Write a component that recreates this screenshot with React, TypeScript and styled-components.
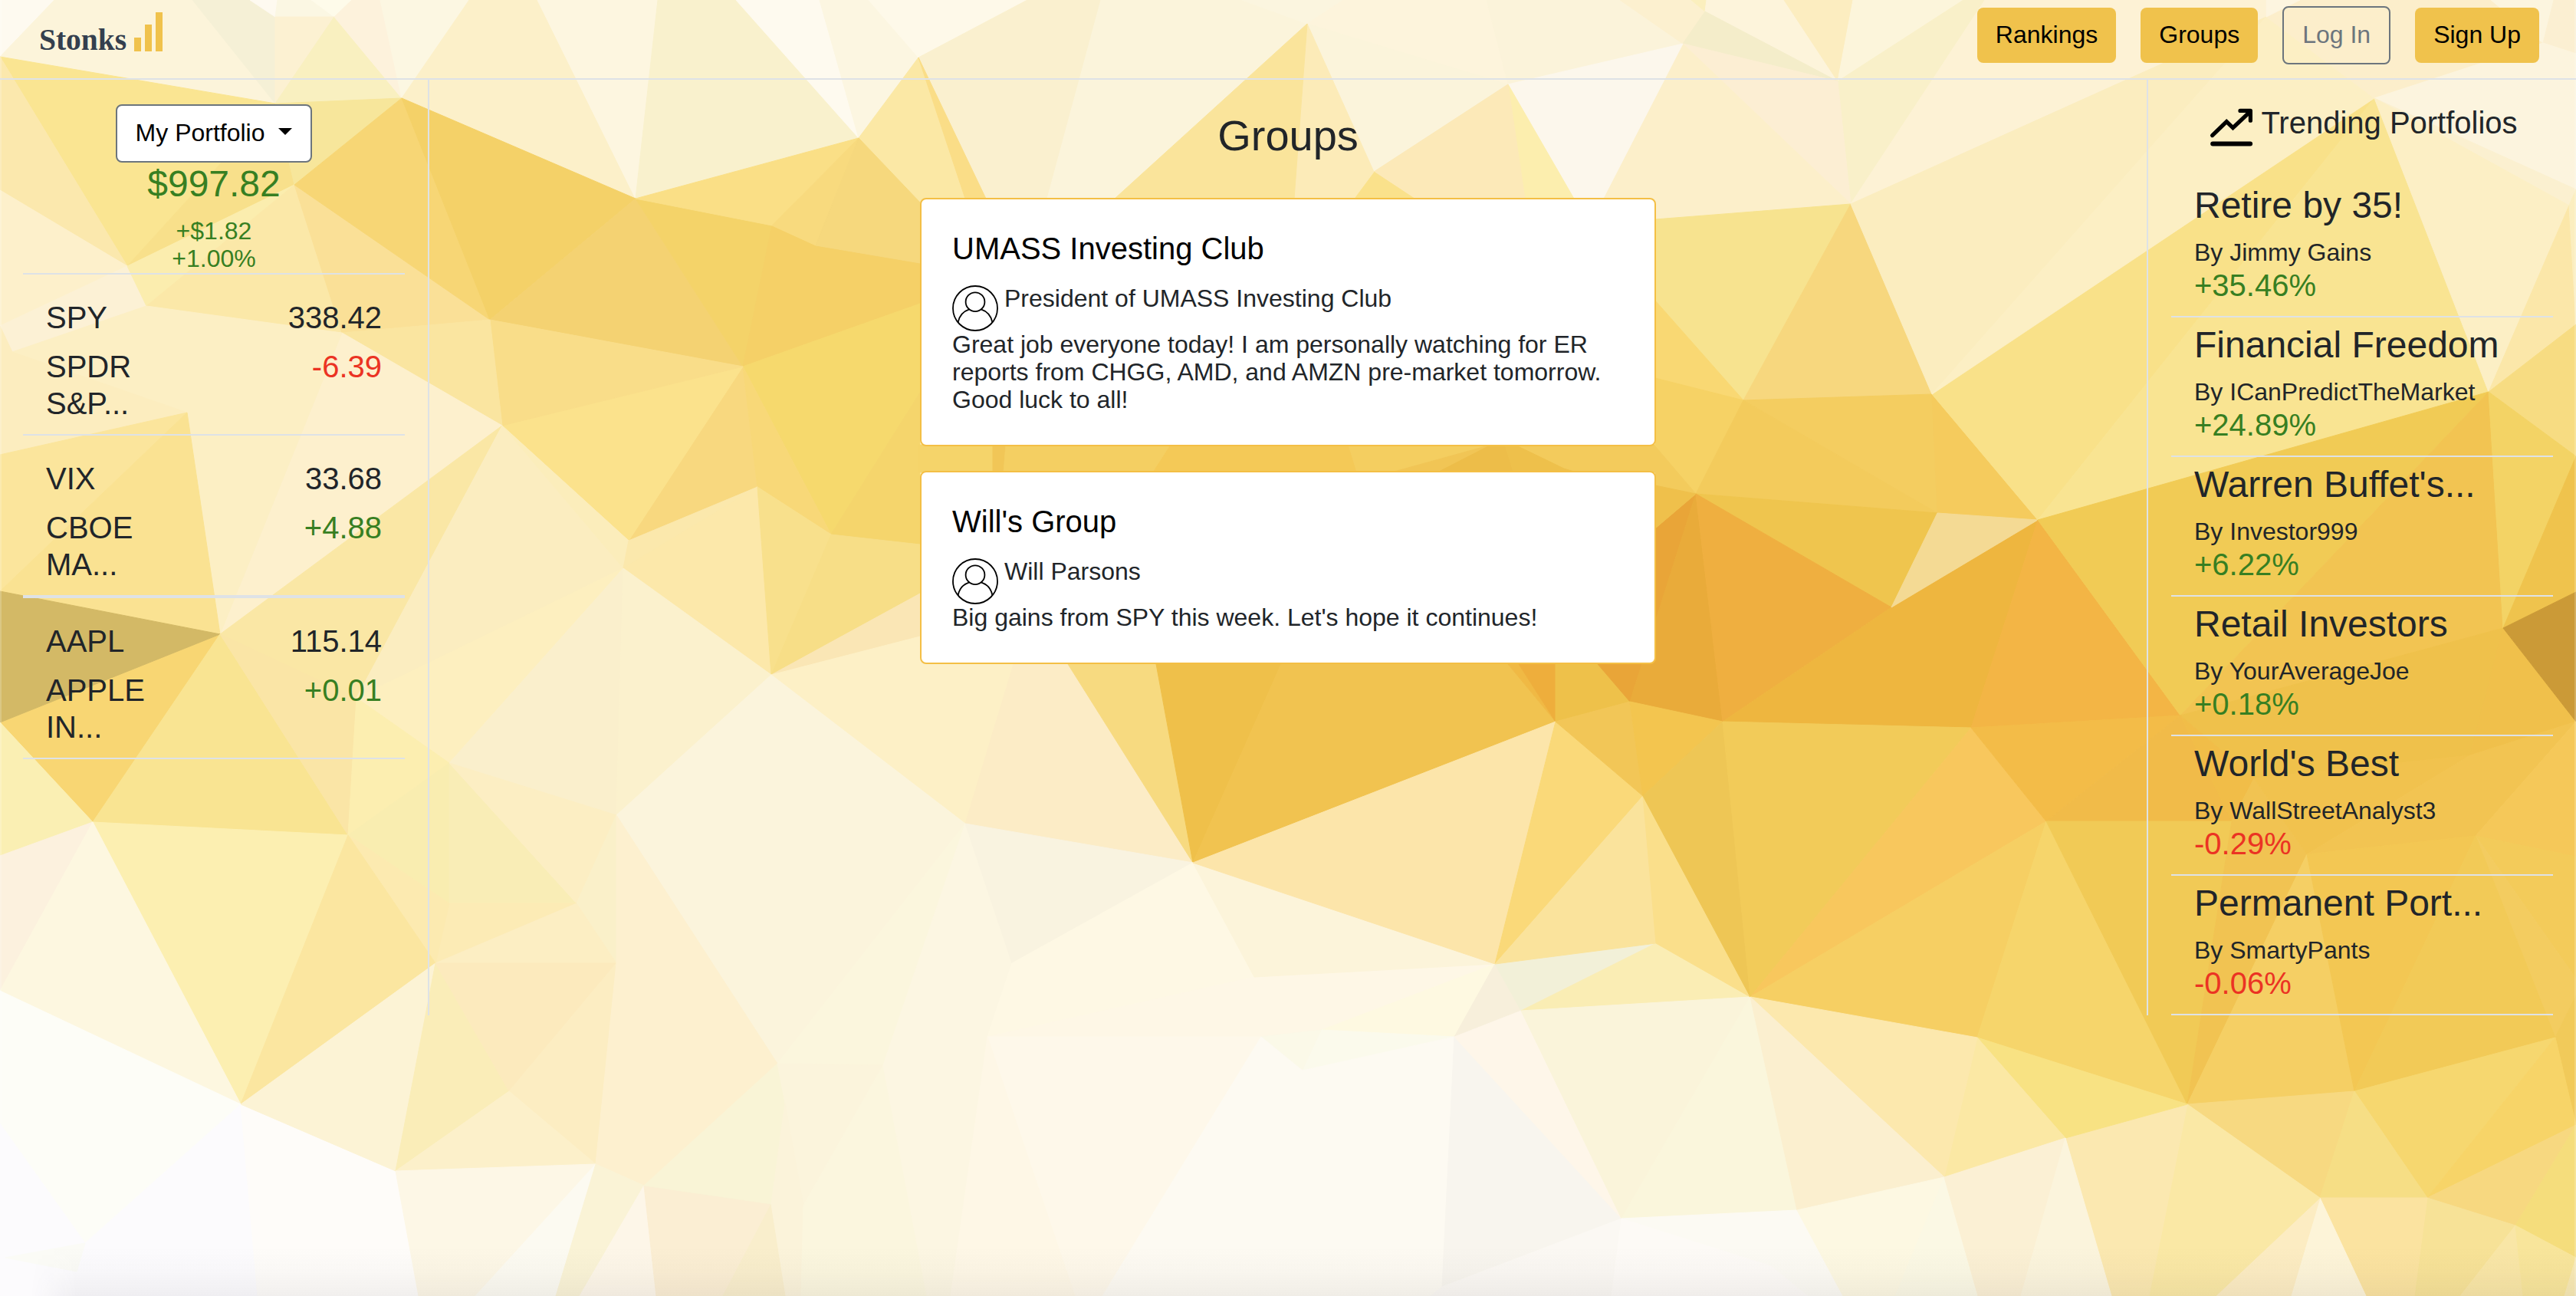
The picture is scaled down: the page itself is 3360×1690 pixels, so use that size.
import React from 'react';
import styled, { createGlobalStyle } from 'styled-components';

const GlobalStyle = createGlobalStyle`
  *, *::before, *::after { box-sizing: border-box; }
  html, body { margin: 0; padding: 0; }
  body {
    font-family: "Liberation Sans", Arial, Helvetica, sans-serif;
    font-size: 32px;
    line-height: 36px;
    color: #212529;
    background: #fdf6e0;
    overflow: hidden;
  }
  h1, h2, h3, p { margin: 0; font-weight: 400; }
`;

const gold = '#f0c24c';
const rule = '#dee2e6';
const gain = '#377f22';
const loss = '#eb3323';

/* Low-poly backdrop: fill colour and polygon points of every facet. */
const facets: [string, string][] = [
  ['#fefaf0', '0,0 71,0 0,74'],
  ['#fcf4da', '71,0 251,0 359,135 0,74'],
  ['#f5f0d6', '251,0 326,0 359,22 359,135'],
  ['#fefaf0', '326,0 362,0 359,22'],
  ['#fbf7e3', '362,0 406,0 436,22 359,22'],
  ['#fefbea', '406,0 459,0 436,22'],
  ['#fcf1d2', '359,22 436,22 359,135'],
  ['#f9f0c0', '436,22 524,128 359,135'],
  ['#fdf2dc', '459,0 496,0 524,128 436,22'],
  ['#fcf7e2', '496,0 612,0 524,128'],
  ['#fcf0c9', '612,0 701,0 829,259 524,128'],
  ['#fdf6e0', '701,0 858,0 829,259'],
  ['#f9f1cd', '858,0 960,0 1120,180 829,259'],
  ['#fefaef', '960,0 1069,0 1120,180'],
  ['#fcf6e1', '1069,0 1133,0 1198,75 1120,180'],
  ['#fef9e9', '1133,0 1340,0 1198,75'],
  ['#faf0cf', '1340,0 1436,0 1366,259 1286,259 1198,75'],
  ['#fbf4db', '1436,0 1620,0 1705,31 1454,259 1366,259'],
  ['#fbf5df', '1620,0 1752,0 1705,31'],
  ['#fdf4dc', '1752,0 1939,0 1967,110 1705,31'],
  ['#fbf4db', '1705,31 1967,110 1792,224'],
  ['#fbf3da', '1939,0 2113,0 2195,57 1967,110'],
  ['#fcf0cf', '2113,0 2206,0 2224,15 2195,57'],
  ['#fbefbe', '2206,0 2226,0 2224,15'],
  ['#fdf4db', '2224,15 2226,0 2327,0 2397,106'],
  ['#f4edca', '2224,15 2397,106 2195,57'],
  ['#fcedc0', '2327,0 2417,0 2397,106'],
  ['#fcf5db', '2417,0 2561,0 2397,106'],
  ['#f9f0c9', '2561,0 2589,0 2414,266 2397,106'],
  ['#fceed3', '2195,57 2397,106 2414,266'],
  ['#fcefca', '2195,57 2414,266 2159,286 2091,259'],
  ['#fcf7ec', '1967,110 2195,57 2091,259 2053,259'],
  ['#fceeae', '1967,110 2053,259 1989,259'],
  ['#fce9b8', '1967,110 1989,259 1845,259 1792,224'],
  ['#fae18b', '1792,224 1845,259 1766,259'],
  ['#fcebb8', '1705,31 1792,224 1766,259 1688,259'],
  ['#fae49b', '1705,31 1688,259 1454,259'],
  ['#fbe8a5', '1198,75 1259,259 1200,264 1120,180'],
  ['#fadd87', '1198,75 1286,259 1259,259'],

  ['#fae592', '0,74 359,135 166,347'],
  ['#f8e08b', '359,135 384,241 166,347'],
  ['#f7e69b', '359,135 524,128 384,241'],
  ['#fbe8ad', '0,74 166,347 0,248'],
  ['#fdf0cb', '0,248 166,347 0,425'],
  ['#fcf1d5', '166,347 191,399 16,459 0,425'],
  ['#fbedae', '166,347 384,241 191,399'],
  ['#fbe8a8', '384,241 446,434 191,399'],
  ['#fae097', '384,241 639,417 446,434'],
  ['#f7d675', '384,241 524,128 639,417'],
  ['#f4d168', '524,128 829,259 639,417'],
  ['#f4d272', '829,259 969,478 639,417'],
  ['#f4d369', '829,259 1007,294 969,478'],
  ['#f5d067', '1007,294 1064,320 1200,343 1200,396 969,478'],
  ['#fadf86', '829,259 1120,180 1007,294'],
  ['#f8da7e', '1120,180 1064,320 1007,294'],
  ['#f6d87d', '1120,180 1200,264 1200,343 1064,320'],
  ['#f6d96d', '969,478 1200,396 1200,512 1084,697'],
  ['#f5d56c', '1200,512 1200,710 1084,697'],
  ['#f8d87f', '969,478 988,635 820,705'],
  ['#f8d878', '969,478 1084,697 988,635'],
  ['#fbe28c', '655,555 969,478 820,705'],
  ['#f9dd89', '639,417 969,478 655,555'],
  ['#fae5a0', '446,434 639,417 655,555'],
  ['#fdf0cd', '446,434 655,555 287,827'],
  ['#fcefc4', '191,399 446,434 287,827 244,538 16,459'],
  ['#fcedbf', '16,459 244,538 0,593 0,425'],
  ['#fbe59c', '244,538 0,771 0,593'],
  ['#fae292', '244,538 287,827 0,771'],
  ['#f8d673', '0,942 287,827 121,1072'],
  ['#d3b966', '0,771 287,827 0,942'],
  ['#fae7a5', '287,827 655,555 465,910'],
  ['#fbedc0', '655,555 813,741 465,910'],
  ['#fbedbb', '655,555 820,705 813,741'],
  ['#fbe8ac', '820,705 988,635 813,741'],
  ['#fce8aa', '988,635 1006,880 813,741'],
  ['#f8e08c', '988,635 1084,697 1006,880'],
  ['#f7de87', '1084,697 1200,710 1200,774 1006,880'],
  ['#fae6b5', '1006,880 1200,774 1200,830'],
  ['#fdf0c6', '1006,880 1200,830 1322,866 1259,1074'],
  ['#fcecc6', '1322,866 1393,866 1556,1125 1259,1074'],
  ['#f7da80', '1393,866 1508,866 1556,1125'],
  ['#efc04a', '1508,866 1671,866 1556,1125'],
  ['#f1c350', '1671,866 1967,866 2029,941 1556,1125'],
  ['#f0b944', '1967,866 1981,866 2029,941'],
  ['#eeae3c', '1981,866 2029,866 2029,941'],
  ['#eec14a', '2029,866 2084,866 2126,915 2029,941'],
  ['#e9a538', '2084,866 2159,689 2212,644 2126,915'],
  ['#e9ab3a', '2212,644 2247,941 2126,915'],

  ['#f5d46a', '1198,580 1296,580 1296,616 1198,616'],
  ['#f1c657', '1295,580 1312,580 1309,616 1295,616'],
  ['#f4cf62', '1312,580 1527,580 1504,616 1309,616'],
  ['#f4c957', '1527,580 1759,580 1770,616 1504,616'],
  ['#f4ce60', '1759,580 1945,580 1815,616 1770,616'],
  ['#f1c555', '1945,580 1955,580 1875,616 1815,616'],
  ['#edbd49', '1945,580 1963,580 1974,616 1875,616'],
  ['#eec04b', '1963,580 1978,580 2040,610 2060,616 1974,616'],
  ['#f3cb5c', '1978,580 2160,580 2160,616 2060,616 2040,610'],

  ['#f9e492', '287,827 454,1089 121,1072'],
  ['#fae5a6', '287,827 465,910 454,1089'],
  ['#fdefbf', '465,910 813,741 586,995'],
  ['#faefcc', '813,741 804,1063 586,995'],
  ['#fbf1cd', '813,741 1006,880 804,1063'],
  ['#fbf4dc', '1006,880 1259,1074 1014,1387 804,1063'],
  ['#fceeb0', '465,910 586,995 454,1089'],
  ['#f9edb0', '454,1089 586,995 586,1178'],
  ['#f9edb6', '586,995 752,1178 586,1178'],
  ['#fceec3', '586,995 804,1063 752,1178'],
  ['#faf0c9', '804,1063 804,1256 752,1178'],
  ['#fcebb5', '586,1178 752,1178 568,1256'],
  ['#fceab0', '454,1089 586,1178 568,1256'],
  ['#fceec3', '568,1256 752,1178 804,1256'],
  ['#fcefb1', '121,1072 454,1089 314,1440'],
  ['#fbe6a0', '454,1089 568,1256 314,1440'],
  ['#faefb3', '0,942 121,1072 0,1116'],
  ['#fcf1de', '0,1116 121,1072 0,1292'],
  ['#fdf7e0', '121,1072 314,1440 0,1292'],
  ['#fdfdf7', '0,1292 314,1440 111,1621 0,1465'],
  ['#fcfbfd', '0,1465 111,1621 314,1440 336,1690 0,1690'],
  ['#fbfbf6', '111,1621 7,1640 100,1658'],
  ['#fefcf9', '314,1440 516,1527 546,1690 336,1690'],
  ['#fcf3d5', '314,1440 568,1256 516,1527'],
  ['#faedb8', '568,1256 664,1423 516,1527'],
  ['#fceabd', '568,1256 804,1256 664,1423'],
  ['#fcedc2', '804,1256 777,1518 664,1423'],
  ['#fcf0ca', '664,1423 777,1518 516,1527'],
  ['#fdf0cf', '804,1063 1014,1387 840,1546 777,1518 804,1256'],
  ['#fdf7e6', '516,1527 777,1518 620,1690 546,1690'],
  ['#fcfaf1', '777,1518 725,1690 620,1690'],
  ['#faf3d6', '777,1518 840,1546 756,1690 725,1690'],
  ['#fdf6e8', '840,1546 856,1690 756,1690'],
  ['#fbeed3', '840,1546 1006,1570 943,1690 856,1690'],
  ['#f9eecc', '1006,1570 1025,1690 943,1690'],
  ['#f9f4d6', '840,1546 1014,1387 1024,1438 1006,1570'],
  ['#fbf6dd', '1014,1387 1259,1074 1152,1389'],
  ['#fbf4dc', '1014,1387 1152,1389 1048,1572 1024,1438'],
  ['#fbf3da', '1006,1570 1024,1438 1048,1572 1045,1690 1025,1690'],
  ['#fbf6de', '1048,1572 1152,1389 1209,1690 1045,1690'],
  ['#fcf6e2', '1259,1074 1320,1256 1288,1352 1240,1690 1209,1690 1152,1389'],
  ['#f9f3e0', '1259,1074 1556,1125 1320,1256'],
  ['#fef8e4', '1320,1256 1556,1125 1636,1274 1288,1352'],
  ['#fef7e6', '1288,1352 1636,1274 1950,1257 1724,1343 1645,1352'],
  ['#fcf4da', '1556,1125 1950,1257 1636,1274'],
  ['#fce5aa', '1556,1125 2029,941 1950,1257'],
  ['#fef9e1', '1950,1257 1897,1352 1724,1343'],
  ['#fbf9e8', '1645,1352 1724,1343 1699,1396'],
  ['#fbfaec', '1724,1343 1897,1352 1699,1396'],
  ['#fef8ea', '1288,1352 1645,1352 1438,1690 1402,1690'],
  ['#fef7e6', '1288,1352 1402,1690 1240,1690'],
  ['#fdfaf2', '1645,1352 1699,1396 1897,1352 1881,1690 1438,1690'],
  ['#f8f5ee', '1897,1352 2115,1589 1881,1678'],
  ['#fbf8f3', '1881,1678 2115,1589 2102,1690 1866,1690'],
  ['#f7efdb', '1950,1257 1984,1318 1897,1352'],
  ['#f2f0d8', '1950,1257 2160,1230 1984,1318'],
  ['#fef6e9', '1984,1318 2115,1589 1897,1352'],
  ['#faedb4', '2160,1230 2283,1300 1984,1318'],
  ['#faf4da', '1984,1318 2283,1300 2115,1589'],
  ['#faf6dc', '2283,1300 2344,1578 2115,1589'],
  ['#fad979', '2029,941 2143,1038 1950,1257'],
  ['#fae39c', '2143,1038 2160,1230 1950,1257'],
  ['#fadf8b', '2143,1038 2283,1300 2160,1230'],
  ['#f2c657', '2029,941 2126,915 2143,1038'],
  ['#f3c54f', '2126,915 2247,941 2143,1038'],
  ['#eec655', '2143,1038 2247,941 2283,1300'],
  ['#fcfaf3', '2115,1589 2344,1578 2404,1690 2358,1690 2310,1651'],
  ['#fdfaf6', '2115,1589 2310,1651 2358,1690 2102,1690'],

  ['#f7e38f', '2159,286 2414,266 2274,522 2159,392'],
  ['#f9d873', '2159,392 2274,522 2159,493'],
  ['#f6d265', '2159,493 2274,522 2212,644 2159,582'],
  ['#f3cb5c', '2159,582 2212,644 2159,633'],
  ['#efc04b', '2159,633 2212,644 2159,689'],
  ['#f7d77e', '2414,266 2520,514 2274,522'],
  ['#f4cd60', '2274,522 2520,514 2527,669'],
  ['#f3cb5c', '2274,522 2527,669 2212,644'],
  ['#f5cb5d', '2520,514 2658,678 2527,669'],
  ['#efc54e', '2212,644 2527,669 2467,792'],
  ['#efaf40', '2212,644 2467,792 2247,941'],
  ['#eeb63f', '2467,792 2658,678 2571,949 2247,941'],
  ['#f4da94', '2527,669 2658,678 2467,792'],
  ['#f3b545', '2658,678 2844,933 2571,949'],
  ['#f9e189', '2520,514 3097,128 2658,678'],
  ['#f9e492', '3097,128 3246,511 2658,678'],
  ['#fdf2d5', '2414,266 2589,0 2956,0 2956,22'],
  ['#fbedbf', '2414,266 2956,22 2520,514'],
  ['#fcefc4', '2956,22 3097,128 2520,514'],
  ['#fceecb', '2956,0 3249,0 3317,56 3097,128 2956,22'],
  ['#fdf5e0', '2956,0 3000,0 2956,22'],
  ['#fcf5df', '3249,0 3331,0 3317,56'],
  ['#fbefd2', '3331,0 3360,0 3360,70 3317,56'],
  ['#fcf4de', '3097,128 3317,56 3360,70 3360,247'],
  ['#fbf0d0', '3097,128 3360,247 3351,268'],
  ['#fcefc5', '3097,128 3351,268 3246,511'],
  ['#fbe7a9', '3351,268 3360,423 3246,511'],
  ['#fbeec0', '3360,247 3360,423 3351,268'],
  ['#f7dc82', '3246,511 3360,423 3360,595'],
  ['#f1cb55', '2658,678 3246,511 2844,933'],
  ['#f2c452', '3246,511 3265,819 2844,933'],
  ['#f3d365', '3246,511 3360,595 3265,819'],
  ['#efc34d', '3360,595 3360,772 3265,819'],
  ['#efc14b', '2844,933 3265,819 3222,985 2940,1015'],
  ['#f0c04b', '3265,819 3360,941 3222,985'],
  ['#cb9a37', '3265,819 3360,772 3360,941'],
  ['#f2cb59', '2247,941 2571,949 2283,1300'],
  ['#f8c75d', '2571,949 2669,1071 2283,1300'],
  ['#f3bc48', '2571,949 2844,933 2669,1071'],
  ['#f1bb49', '2844,933 2911,1071 2669,1071'],
  ['#f1bd48', '2844,933 2940,1015 2911,1071'],
  ['#f6cf63', '2669,1071 2579,1353 2283,1300'],
  ['#f6d56b', '2669,1071 2853,1440 2579,1353'],
  ['#f1ca56', '2669,1071 2911,1071 2853,1440'],
  ['#f1c352', '2911,1071 2940,1015 3009,1114 2853,1440'],
  ['#f1c24e', '2940,1015 3222,985 3009,1114'],
  ['#f2c452', '3222,985 3360,941 3229,1090 3009,1114'],
  ['#f5c859', '3360,941 3360,1117 3229,1090'],
  ['#f3cb5a', '3229,1090 3360,1117 3360,1276'],
  ['#f3cc60', '3229,1090 3360,1276 3360,1298 3333,1353'],
  ['#f5cf64', '3009,1114 3071,1423 2853,1440'],
  ['#f3c753', '3009,1114 3229,1090 3071,1423'],
  ['#f2ca57', '3229,1090 3333,1353 3071,1423'],
  ['#f1ca5a', '3333,1353 3360,1298 3360,1467'],
  ['#f6d76f', '3071,1423 3333,1353 3166,1562'],
  ['#f7d468', '3333,1353 3360,1467 3166,1562'],
  ['#f7d981', '2853,1440 3071,1423 3026,1562'],
  ['#f6de85', '3071,1423 3166,1562 3026,1562'],
  ['#f7d880', '3166,1562 3360,1467 3281,1598'],
  ['#f5dd7c', '3281,1598 3360,1467 3360,1640'],
  ['#f7e297', '3166,1562 3281,1598 3209,1690 3149,1690'],
  ['#f9e6a6', '3281,1598 3291,1690 3209,1690'],
  ['#f8e59b', '3281,1598 3360,1640 3345,1690 3291,1690'],
  ['#f8e9b4', '3360,1640 3360,1690 3345,1690'],
  ['#fbe3a0', '3026,1562 3166,1562 3149,1690 3086,1690'],
  ['#fdf4d8', '3026,1562 3086,1690 2988,1690'],
  ['#fcecc2', '3026,1562 2988,1690 2890,1690'],
  ['#fae8a5', '2853,1440 3026,1562 2890,1690 2803,1690'],
  ['#fbe8b0', '2694,1484 2853,1440 2803,1690 2754,1690'],
  ['#f8e283', '2579,1353 2853,1440 2694,1484'],
  ['#fbe8a4', '2579,1353 2694,1484 2536,1535'],
  ['#fce8ad', '2283,1300 2579,1353 2536,1535'],
  ['#fbefcf', '2283,1300 2536,1535 2344,1578'],
  ['#fdf8e2', '2344,1578 2536,1535 2472,1690 2404,1690'],
  ['#fbf8e4', '2536,1535 2580,1690 2472,1690'],
  ['#fbf0d4', '2536,1535 2694,1484 2636,1690 2580,1690'],
  ['#fbf4dc', '2694,1484 2754,1690 2636,1690'],
];

const Page = styled.div`
  position: relative;
  width: 3360px;
  height: 1690px;
  overflow: hidden;
`;

const Backdrop = styled.svg`
  position: absolute;
  inset: 0;
  z-index: -1;
`;

const Shade = styled.div`
  position: absolute;
  left: 40px;
  right: 0;
  bottom: 0;
  height: 64px;
  background: linear-gradient(to bottom, rgba(40, 40, 60, 0), rgba(40, 40, 60, 0.02) 50%, rgba(40, 40, 60, 0.06));
  mask-image: linear-gradient(to right, transparent, #000 60px);
`;

const Header = styled.header`
  display: flex;
  justify-content: space-between;
  align-items: flex-start;
  height: 104px;
  padding: 8px 48px 0 51px;
  border-bottom: 2px solid ${rule};
`;

const Brand = styled.a`
  display: flex;
  align-items: flex-end;
  gap: 10px;
  height: 59px;
  font: 700 39.5px/44px "Liberation Serif", "Times New Roman", serif;
  color: #343f4e;
`;

const BrandName = styled.span`
  height: 37px;
`;

const Nav = styled.nav`
  display: flex;
  align-items: center;
  gap: 32px;
`;

const NavButton = styled.button<{ $outline?: boolean }>`
  padding: 11px 24px 13px;
  border: ${p => (p.$outline ? '2px solid #6c757d' : '0')};
  border-radius: 8px;
  background: ${p => (p.$outline ? 'transparent' : gold)};
  color: ${p => (p.$outline ? '#6c757d' : '#000')};
  font: 400 32px/48px "Liberation Sans", Arial, sans-serif;
`;

const Columns = styled.main`
  display: grid;
  grid-template-columns: 560px 1fr 560px;
  height: 1220px;
`;

const Watchlist = styled.aside`
  padding: 32px 30px 0;
  border-right: 2px solid ${rule};
`;

const Summary = styled.section`
  display: flex;
  flex-direction: column;
  align-items: center;
  height: 222px;
  border-bottom: 2px solid ${rule};
  color: ${gain};
`;

const Dropdown = styled.button`
  padding: 11px 24px 13px;
  border: 2px solid #6c757d;
  border-radius: 8px;
  background: #fff;
  color: #000;
  font: 400 32px/48px "Liberation Sans", Arial, sans-serif;
  white-space: pre;
`;

const Caret = styled.span`
  display: inline-block;
  margin-left: 9px;
  vertical-align: 8px;
  border-top: 9.6px solid;
  border-left: 9.6px solid transparent;
  border-right: 9.6px solid transparent;
`;

const Balance = styled.h2`
  margin: -1px 0 14px;
  font-size: 48px;
  line-height: 58px;
`;

const Ticker = styled.article<{ $thick?: boolean }>`
  display: grid;
  grid-template-columns: 150px 1fr;
  row-gap: 16px;
  padding: 32px 30px 16px;
  border-bottom: ${p => (p.$thick ? 4 : 2)}px solid ${rule};
  font-size: 40px;
  line-height: 48px;
`;

const Figure = styled.span<{ $tone?: string }>`
  justify-self: end;
  color: ${p => p.$tone || 'inherit'};
`;

const Feed = styled.section`
  display: flex;
  flex-direction: column;
  align-items: center;
  gap: 32px;
`;

const FeedTitle = styled.h1`
  margin: 39px 0 16px;
  font-size: 56px;
  line-height: 67px;
`;

const Card = styled.article`
  width: 960px;
  padding: 40px 40px 41px;
  border: 2px solid #f4bf45;
  border-radius: 8px;
  background: #fff;
`;

const CardTitle = styled.h2`
  margin-bottom: 24px;
  color: #000;
  font-size: 40px;
  line-height: 48px;
`;

const Author = styled.div`
  display: flex;
  gap: 8px;
  height: 59px;
`;

const AuthorName = styled.span`
  margin-top: -1px;
`;

const Trending = styled.aside`
  padding: 32px 30px 0;
  border-left: 2px solid ${rule};
`;

const TrendingTitle = styled.h2`
  display: flex;
  justify-content: center;
  gap: 11px;
  height: 96px;
  font-size: 40px;
  line-height: 48px;

  svg { overflow: visible; }
`;

const Portfolio = styled.article`
  padding: 7px 30px 16px;
  border-bottom: 2px solid ${rule};
`;

const PortfolioName = styled.h3`
  margin-bottom: 14px;
  font-size: 48px;
  line-height: 58px;
  white-space: nowrap;
`;

const Owner = styled.p`
  line-height: 37px;
`;

const Change = styled.p<{ $tone: string }>`
  color: ${p => p.$tone};
  font-size: 40px;
  line-height: 48px;
`;

const BarsIcon = () => (
  <svg width="38" height="52" viewBox="0 0 38 52" fill={gold}>
    <rect x="0" y="34" width="9" height="18" />
    <rect x="14" y="17" width="9" height="35" />
    <rect x="28" y="1" width="9" height="51" />
  </svg>
);

const UserIcon = () => (
  <svg width="60" height="60" viewBox="0 0 60 60" fill="none" stroke="#000" strokeWidth="1.8">
    <circle cx="30" cy="30" r="29" />
    <circle cx="30" cy="21.7" r="12.4" />
    <path d="M7.5 48.5C9 41 14 34 22.3 31.3M37.7 31.3C46 34 51 41 52.5 48.5" />
  </svg>
);

const TrendIcon = () => (
  <svg width="60" height="60" viewBox="0 0 60 60" fill="none" stroke="#000" strokeLinecap="round">
    <path d="M7.6 40.6L26.2 22.6L34.5 30.6L56.5 10" strokeWidth="5.2" strokeLinejoin="miter" />
    <path d="M44 8.4H57.4V21.2" strokeWidth="5.2" strokeLinejoin="round" />
    <path d="M8.2 51.5H57.1" strokeWidth="6" />
  </svg>
);

const tickers = [
  { symbol: 'SPY', name: 'SPDR S&P...', price: '338.42', change: '-6.39' },
  { symbol: 'VIX', name: 'CBOE MA...', price: '33.68', change: '+4.88' },
  { symbol: 'AAPL', name: 'APPLE IN...', price: '115.14', change: '+0.01' },
];

const groups = [
  {
    title: 'UMASS Investing Club',
    author: 'President of UMASS Investing Club',
    message:
      'Great job everyone today! I am personally watching for ER reports from CHGG, AMD, and AMZN pre-market tomorrow. Good luck to all!',
  },
  {
    title: "Will's Group",
    author: 'Will Parsons',
    message: "Big gains from SPY this week. Let's hope it continues!",
  },
];

const portfolios = [
  { name: 'Retire by 35!', owner: 'Jimmy Gains', change: '+35.46%' },
  { name: 'Financial Freedom', owner: 'ICanPredictTheMarket', change: '+24.89%' },
  { name: "Warren Buffet's...", owner: 'Investor999', change: '+6.22%' },
  { name: 'Retail Investors', owner: 'YourAverageJoe', change: '+0.18%' },
  { name: "World's Best", owner: 'WallStreetAnalyst3', change: '-0.29%' },
  { name: 'Permanent Port...', owner: 'SmartyPants', change: '-0.06%' },
];

const tone = (change: string) => (change.startsWith('-') ? loss : gain);

export default function App() {
  return (
    <Page>
      <GlobalStyle />
      <Backdrop width="3360" height="1690" viewBox="0 0 3360 1690">
        {facets.map(([fill, points], i) => (
          <polygon key={i} points={points} fill={fill} stroke={fill} strokeWidth="1" />
        ))}
        <rect width="2" height="1690" fill="#fff" opacity="0.2" />
        <rect x="3358" width="2" height="1690" fill="#fff" opacity="0.2" />
      </Backdrop>

      <Header>
        <Brand>
          <BrandName>Stonks</BrandName>
          <BarsIcon />
        </Brand>
        <Nav>
          <NavButton>Rankings</NavButton>
          <NavButton>Groups</NavButton>
          <NavButton $outline>Log In</NavButton>
          <NavButton>Sign Up</NavButton>
        </Nav>
      </Header>

      <Columns>
        <Watchlist>
          <Summary>
            <Dropdown>
              {'My Portfolio '}
              <Caret />
            </Dropdown>
            <Balance>$997.82</Balance>
            <span>+$1.82</span>
            <span>+1.00%</span>
          </Summary>
          {tickers.map((t, i) => (
            <Ticker key={t.symbol} $thick={i === 1}>
              <span>{t.symbol}</span>
              <Figure>{t.price}</Figure>
              <span>{t.name}</span>
              <Figure $tone={tone(t.change)}>{t.change}</Figure>
            </Ticker>
          ))}
        </Watchlist>

        <Feed>
          <FeedTitle>Groups</FeedTitle>
          {groups.map(g => (
            <Card key={g.title}>
              <CardTitle>{g.title}</CardTitle>
              <Author>
                <UserIcon />
                <AuthorName>{g.author}</AuthorName>
              </Author>
              <p>{g.message}</p>
            </Card>
          ))}
        </Feed>

        <Trending>
          <TrendingTitle>
            <TrendIcon />
            <span>Trending Portfolios</span>
          </TrendingTitle>
          {portfolios.map(p => (
            <Portfolio key={p.name}>
              <PortfolioName>{p.name}</PortfolioName>
              <Owner>By {p.owner}</Owner>
              <Change $tone={tone(p.change)}>{p.change}</Change>
            </Portfolio>
          ))}
        </Trending>
      </Columns>
      <Shade />
    </Page>
  );
}
